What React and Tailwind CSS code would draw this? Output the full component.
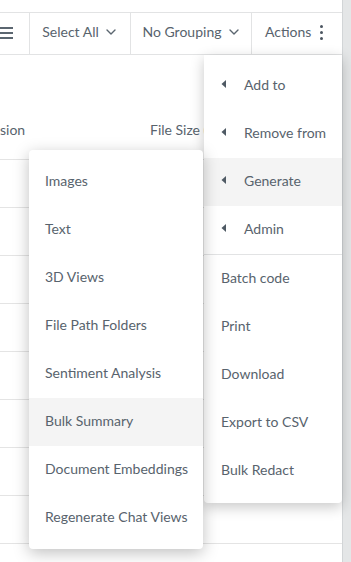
import React from "react";

const txt = "text-[#58636d]";

function Chevron() {
  return (
    <svg width="10" height="6" viewBox="0 0 10 6" className="shrink-0">
      <path d="M1 1l4 4 4-4" fill="none" stroke="#5b6670" strokeWidth="1.4" strokeLinecap="round" strokeLinejoin="round" />
    </svg>
  );
}

function Caret() {
  return (
    <svg width="5" height="8" viewBox="0 0 5 8" className="shrink-0">
      <path d="M5 0L0.5 4L5 8z" fill="#4f5a64" />
    </svg>
  );
}

export default function App() {
  const rows = Array.from({ length: 9 });
  const actions1 = ["Add to", "Remove from", "Generate", "Admin"];
  const actions2 = ["Batch code", "Print", "Download", "Export to CSV", "Bulk Redact"];
  const gen = [
    "Images",
    "Text",
    "3D Views",
    "File Path Folders",
    "Sentiment Analysis",
    "Bulk Summary",
    "Document Embeddings",
    "Regenerate Chat Views",
  ];
  return (
    <div
      className={`relative w-[351px] h-[562px] overflow-hidden bg-white flex text-[14px] ${txt}`}
      style={{ fontFamily: "Lato, 'Open Sans', sans-serif" }}
    >
      <div className="flex-1 flex flex-col min-w-0">
        <div className="h-[12px] shrink-0" />
        <div className="h-[43px] shrink-0 flex border-y border-[#e2e3e4]">
          <div className="w-[30px] shrink-0 flex flex-col justify-center gap-[3px] border-r border-[#e2e3e4] pb-[1px]">
            <div className="w-[13px] h-[2px] bg-[#5b6670]" />
            <div className="w-[13px] h-[2px] bg-[#5b6670]" />
            <div className="w-[13px] h-[2px] bg-[#5b6670]" />
          </div>
          <div className="w-[101px] shrink-0 flex items-center justify-center gap-[7px] border-r border-[#e2e3e4] pr-[2px] pb-[4px]">
            <span>Select All</span>
            <Chevron />
          </div>
          <div className="w-[121px] shrink-0 flex items-center justify-center gap-[8px] border-r border-[#e2e3e4] pb-[4px]">
            <span>No Grouping</span>
            <Chevron />
          </div>
          <div className="flex-1 flex items-center pl-[13px] gap-[9px] pb-[4px]">
            <span>Actions</span>
            <div className="flex flex-col gap-[3px] mt-[2px]">
              <div className="w-[3px] h-[3px] rounded-full bg-[#4b5560]" />
              <div className="w-[3px] h-[3px] rounded-full bg-[#4b5560]" />
              <div className="w-[3px] h-[3px] rounded-full bg-[#4b5560]" />
            </div>
          </div>
        </div>
        <div className="h-[105px] shrink-0 border-b border-[#e4e4e4] flex pt-[66px] leading-[17px]">
          <span className="w-[150px] shrink-0">sion</span>
          <span className="whitespace-nowrap">File Size (MB)</span>
        </div>
        {rows.map((_, i) => (
          <div key={i} className="h-[48px] shrink-0 border-b border-[#e4e4e4]" />
        ))}
      </div>
      <div className="w-[9px] shrink-0 bg-[#e4e6e7] border-l border-[#d2d5d7]" />

      <div className="absolute left-[204px] top-[55px] w-[138px] h-[448px] bg-white rounded-b-[4px] shadow-[0_4px_14px_rgba(0,0,0,0.22)] pt-[7px]">
        {actions1.map((a) => (
          <div
            key={a}
            className={`h-[48px] flex items-center pl-[17px] gap-[18px] pb-[4px] ${a === "Generate" ? "bg-[#f4f4f4]" : ""}`}
          >
            <Caret />
            <span>{a}</span>
          </div>
        ))}
        <div className="h-[1px] bg-[#e2e3e4]" />
        {actions2.map((a) => (
          <div key={a} className="h-[48px] flex items-center pl-[17px] pb-[4px]">
            {a}
          </div>
        ))}
      </div>

      <div className="absolute left-[29px] top-[150px] w-[174px] h-[399px] bg-white rounded-[4px] shadow-[0_4px_16px_rgba(0,0,0,0.25)] pt-[8px]">
        {gen.map((g) => (
          <div
            key={g}
            className={`h-[48px] flex items-center pl-[16px] whitespace-nowrap pb-[4px] ${g === "Bulk Summary" ? "bg-[#f4f4f4]" : ""}`}
          >
            {g}
          </div>
        ))}
      </div>
    </div>
  );
}
